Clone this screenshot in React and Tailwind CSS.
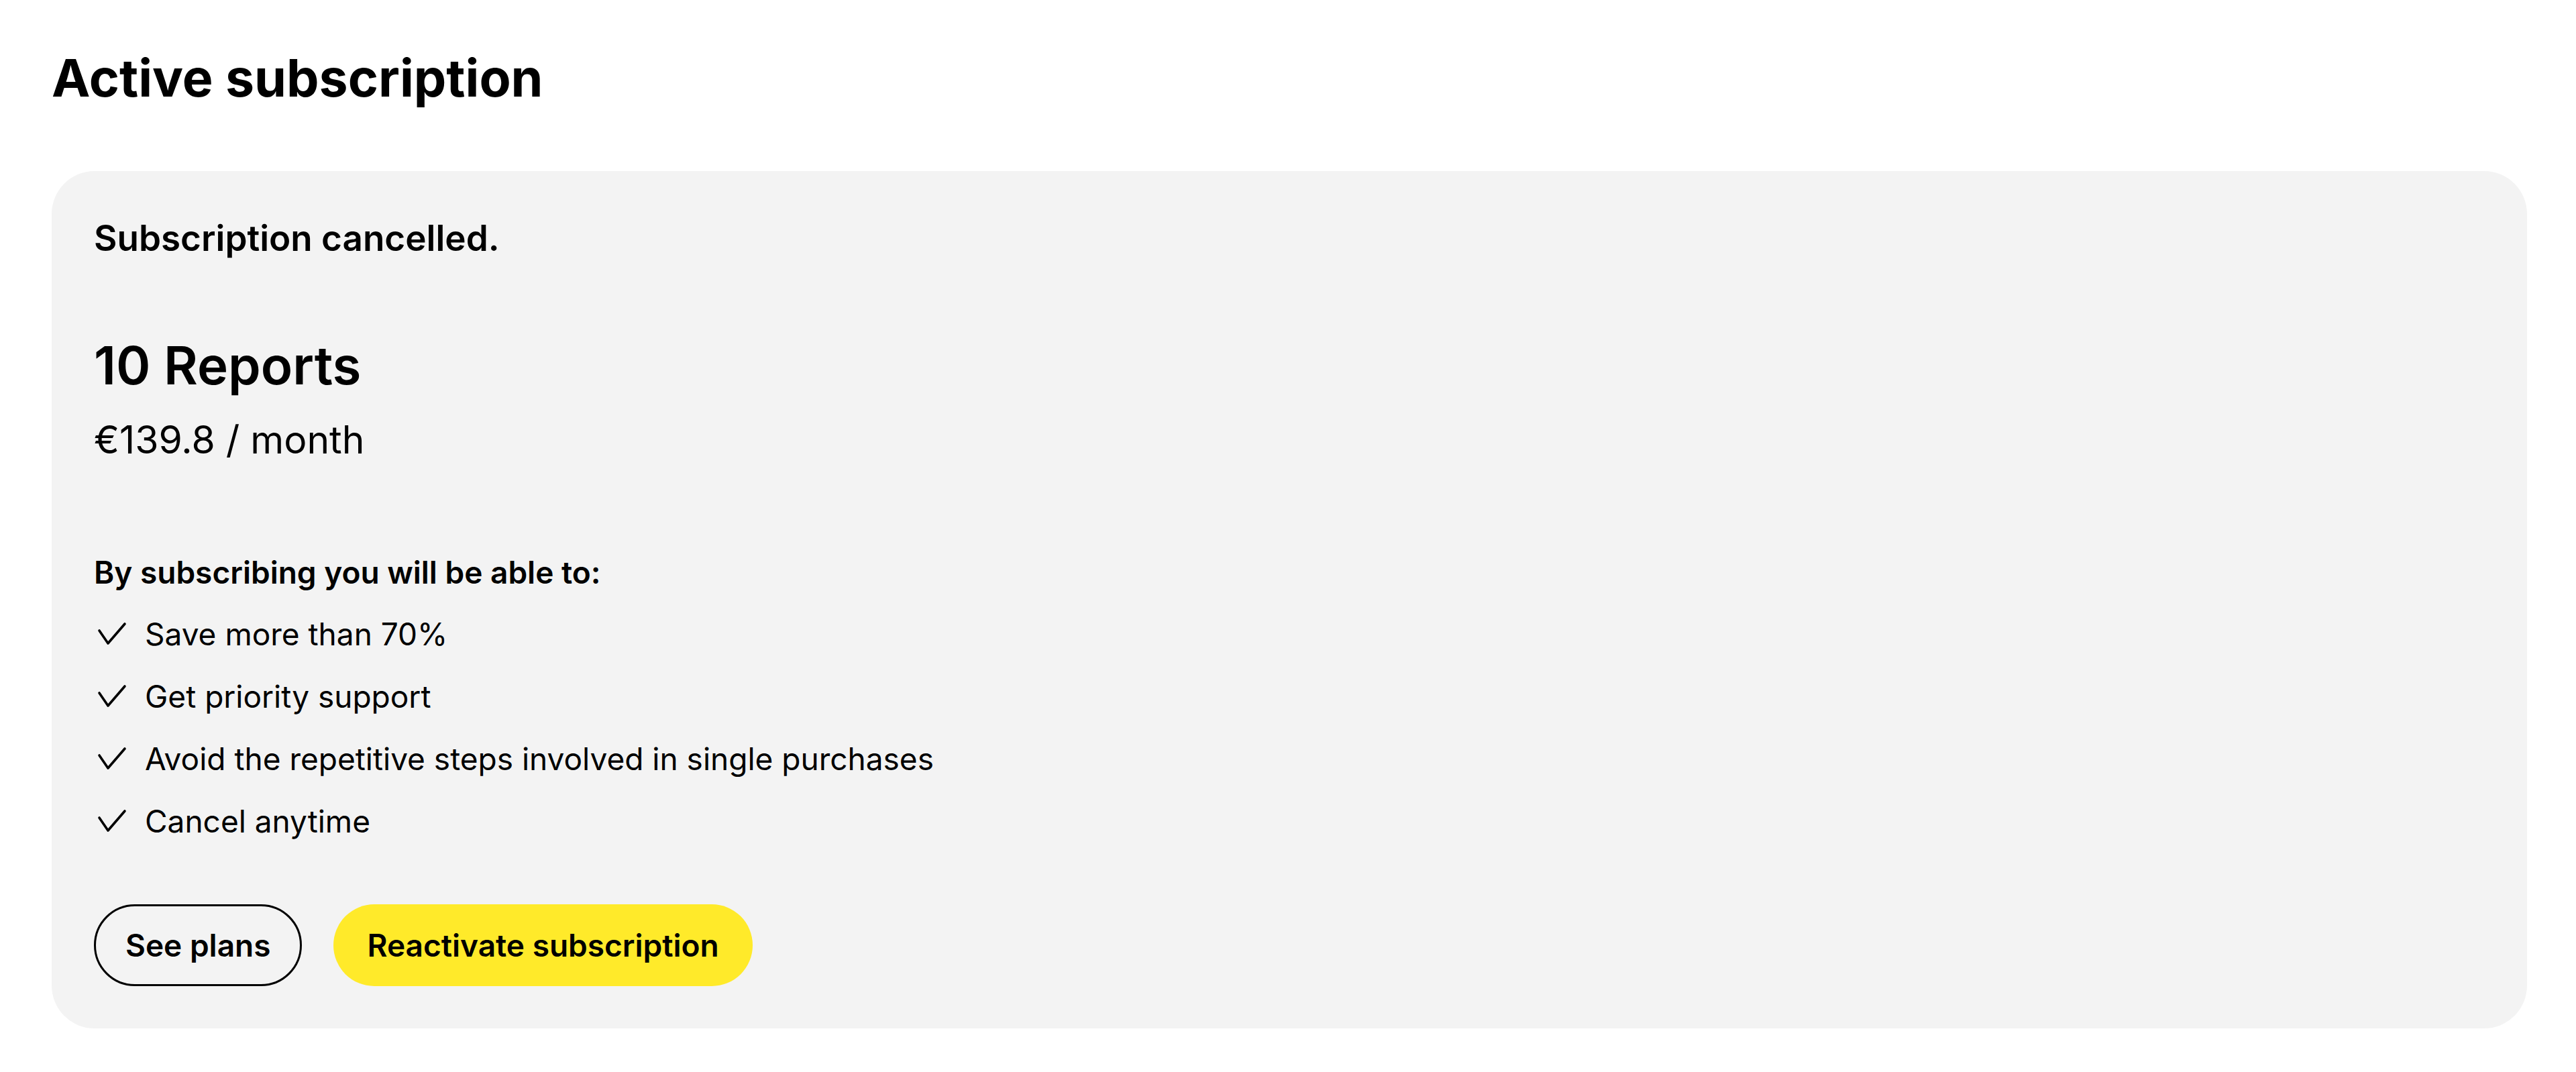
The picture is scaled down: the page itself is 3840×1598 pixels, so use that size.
import React from "react";

const perks = [
  "Save more than 70%",
  "Get priority support",
  "Avoid the repetitive steps involved in single purchases",
  "Cancel anytime",
];

function Check() {
  return (
    <svg
      viewBox="0 0 44 36"
      className="w-[44px] h-[36px] shrink-0"
      fill="none"
      stroke="#000"
      strokeWidth="3.6"
      strokeLinecap="round"
      strokeLinejoin="round"
    >
      <path d="M3 13 L16 32 L41 3" />
    </svg>
  );
}

export default function App() {
  return (
    <div className="min-h-screen bg-white pt-[70px] pl-[77px] pr-[73px] text-black font-['Inter','Liberation_Sans',sans-serif]">
      <h1 className="text-[77px] leading-[92px] font-bold">
        Active subscription
      </h1>

      {/* Subscription card */}
      <div className="mt-[93px] bg-[#f3f3f3] rounded-[64px] pl-[63px] pr-[63px] pt-[68px] pb-[63px]">
        <p className="text-[53px] leading-[64px] font-semibold">
          Subscription cancelled.
        </p>

        <h2 className="mt-[112px] text-[78px] leading-[92px] font-semibold">
          10 Reports
        </h2>
        <p className="mt-[29px] text-[57px] leading-[72px]">
          €139.8 / month
        </p>

        <p className="mt-[133px] text-[46px] leading-[56px] font-semibold">
          By subscribing you will be able to:
        </p>
        <ul className="mt-[36px] flex flex-col gap-[37px]">
          {perks.map((perk) => (
            <li
              key={perk}
              className="flex items-center gap-[27px] pl-[5px] text-[46px] leading-[56px]"
            >
              <Check />
              <span>{perk}</span>
            </li>
          ))}
        </ul>

        {/* Actions */}
        <div className="mt-[96px] flex items-center gap-[47px]">
          <button className="h-[122px] px-[44px] rounded-full border-[3px] border-black text-[46px] font-semibold">
            See plans
          </button>
          <button className="h-[122px] px-[50px] rounded-full bg-[#ffea2a] text-[46px] font-semibold">
            Reactivate subscription
          </button>
        </div>
      </div>
    </div>
  );
}
